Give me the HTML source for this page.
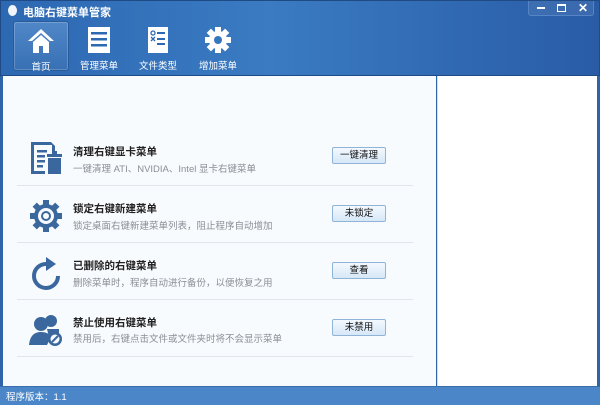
<!DOCTYPE html>
<html><head><meta charset="utf-8"><style>
*{margin:0;padding:0;box-sizing:border-box}
body{width:600px;height:405px;overflow:hidden;font-family:"Liberation Sans","Noto Sans CJK SC",sans-serif;background:#2f64a8;position:relative}
.top{position:absolute;left:0;top:0;width:600px;height:76px;background:linear-gradient(90deg,#2d68b2 0%,#3a7bc2 45%,#2f67b0 80%,#2a5ca6 100%);border:1px solid #1f4a86}
.title{position:absolute;left:22px;top:3px;color:#fff;font-size:11px;font-weight:bold}
.egg{position:absolute;left:7px;top:4px;width:9px;height:11px;border-radius:50%;background:#f0f4fa}
.ctl{position:absolute;left:527px;top:0;width:66px;height:15px;border:1px solid #5585c4;border-top:none;border-radius:0 0 3px 3px;background:rgba(255,255,255,.08);color:#fff;font-size:10px}
.nav{position:absolute;top:20px;width:56px;height:50px;color:#fff;font-size:9.5px;text-align:center}
.nav span{position:absolute;left:0;right:0;top:37px}
.nav svg{position:absolute;left:50%;transform:translateX(-50%);top:5px}
.sel{background:linear-gradient(#4f87c8,#3870b4);border:1px solid #2a5b99;border-radius:3px;box-shadow:inset 0 0 0 1px rgba(255,255,255,.2)}
.main{position:absolute;left:3px;top:76px;width:433px;height:310px;background:#f8fbfe}
.right{position:absolute;left:437px;top:76px;width:160px;height:310px;background:#fff;border-left:1px solid #d8dfe8}
.status{position:absolute;left:0;top:386px;width:600px;height:19px;background:#4a86c8;color:#fff;font-size:9.5px;padding:2px 6px;border-top:1px solid #3a6eaa}
.row{position:absolute;left:14px;width:396px;height:57px;border-bottom:1px solid #e2e6ec}
.row h3{position:absolute;left:56px;font-size:10.5px;font-weight:bold;color:#222}
.row p{position:absolute;left:56px;font-size:9.5px;color:#8a8f96}
.btn{position:absolute;left:315px;width:54px;height:17px;border:1px solid #8fb4d8;border-radius:2px;background:linear-gradient(#f4f9fe,#d6e7f7);font-size:9.5px;text-align:center;line-height:15px;color:#111}
.ic{position:absolute;left:12px}
</style></head><body>
<div class="top">
<div class="egg"></div>
<div class="title">电脑右键菜单管家</div>
<div class="ctl"><span style="position:absolute;left:8px;top:6px;width:8px;height:2px;background:#fff"></span><span style="position:absolute;left:28px;top:3px;width:9px;height:8px;border:1px solid #fff;border-top-width:2px"></span><span style="position:absolute;left:49px;top:0px;font-size:12px;font-weight:bold">✕</span></div>
<div class="nav sel" style="left:12px">
<svg width="30" height="28" viewBox="0 0 30 28"><path d="M15 2 L2 14 L6 14 L15 6 L24 14 L28 14 Z" fill="#fff"/><path d="M7 15 L15 8 L23 15 V26 H17 V19 H13 V26 H7 Z" fill="#fff"/></svg>
<span>首页</span></div>
<div class="nav" style="left:70px">
<svg width="24" height="28" viewBox="0 0 24 28"><rect x="1" y="1" width="22" height="26" fill="#fff"/><rect x="4" y="6" width="16" height="2.5" fill="#2d68b2"/><rect x="4" y="12" width="16" height="2.5" fill="#2d68b2"/><rect x="4" y="18" width="16" height="2.5" fill="#2d68b2"/></svg>
<span>管理菜单</span></div>
<div class="nav" style="left:129px">
<svg width="22" height="28" viewBox="0 0 22 28"><rect x="1" y="1" width="20" height="26" fill="#fff"/><circle cx="6" cy="7" r="2" fill="none" stroke="#2d68b2" stroke-width="1.3"/><rect x="10" y="6" width="8" height="2" fill="#2d68b2"/><path d="M4 11l4 4M8 11l-4 4" stroke="#2d68b2" stroke-width="1.3"/><rect x="10" y="12" width="8" height="2" fill="#2d68b2"/><rect x="10" y="17" width="8" height="2" fill="#2d68b2"/></svg>
<span>文件类型</span></div>
<div class="nav" style="left:189px">
<svg width="28" height="28" viewBox="0 0 28 28"><g fill="#fff"><circle cx="14" cy="14" r="9"/><g id="t"><rect x="11" y="1" width="6" height="6"/><rect x="11" y="21" width="6" height="6"/></g><use href="#t" transform="rotate(45 14 14)"/><use href="#t" transform="rotate(90 14 14)"/><use href="#t" transform="rotate(135 14 14)"/></g><circle cx="14" cy="14" r="4" fill="#3676bd"/></svg>
<span>增加菜单</span></div>
</div>
<div class="main">
<div class="row" style="top:53px"><div class="ic" style="top:11px"><svg width="36" height="36" viewBox="0 0 36 36"><path d="M2 2H22L26 6V12H23V5H5V31H16V34H2Z" fill="#3a679e"/><rect x="8" y="10" width="10" height="2.5" fill="#3a679e"/><rect x="8" y="15" width="8" height="2.5" fill="#3a679e"/><rect x="8" y="20" width="8" height="2.5" fill="#3a679e"/><rect x="8" y="25" width="6" height="2.5" fill="#3a679e"/><rect x="18" y="14" width="15" height="3" fill="#3a679e"/><rect x="23" y="11" width="5" height="3" fill="#3a679e"/><path d="M19 18H32V34H19Z" fill="#3a679e"/></svg></div><h3 style="top:15px">清理右键显卡菜单</h3><p style="top:32px">一键清理 ATI、NVIDIA、Intel 显卡右键菜单</p><div class="btn" style="top:18px">一键清理</div></div>
<div class="row" style="top:110px"><div class="ic" style="top:13px"><svg width="34" height="34" viewBox="0 0 34 34"><g fill="#3a679e"><circle cx="17" cy="17" r="12"/><g id="g2"><rect x="14" y="1" width="6" height="6"/><rect x="14" y="27" width="6" height="6"/></g><use href="#g2" transform="rotate(45 17 17)"/><use href="#g2" transform="rotate(90 17 17)"/><use href="#g2" transform="rotate(135 17 17)"/></g><circle cx="17" cy="17" r="8" fill="#f8fbfe"/><circle cx="17" cy="17" r="5" fill="#3a679e"/><circle cx="17" cy="17" r="3" fill="#f8fbfe"/></svg></div><h3 style="top:15px">锁定右键新建菜单</h3><p style="top:32px">锁定桌面右键新建菜单列表，阻止程序自动增加</p><div class="btn" style="top:19px">未锁定</div></div>
<div class="row" style="top:167px"><div class="ic" style="top:14px"><svg width="34" height="34" viewBox="0 0 34 34"><path d="M18 7 A12 12 0 1 0 29 19" fill="none" stroke="#3a679e" stroke-width="4"/><path d="M17 0 L27 7 L17 14 Z" fill="#3a679e"/></svg></div><h3 style="top:15px">已删除的右键菜单</h3><p style="top:32px">删除菜单时，程序自动进行备份，以便恢复之用</p><div class="btn" style="top:19px">查看</div></div>
<div class="row" style="top:224px"><div class="ic" style="top:13px"><svg width="34" height="34" viewBox="0 0 34 34"><g fill="#3a679e"><circle cx="22" cy="8" r="6"/><path d="M18 16 H30 V24 H20Z"/><circle cx="12" cy="11" r="7"/><path d="M0 32 C1 22 6 19 12 19 C17 19 21 21 22 24 L18 32Z"/><circle cx="26" cy="26" r="7"/></g><circle cx="26" cy="26" r="4.5" fill="#f8fbfe"/><path d="M23 29 L29 23" stroke="#3a679e" stroke-width="2"/></svg></div><h3 style="top:15px">禁止使用右键菜单</h3><p style="top:31px">禁用后，右键点击文件或文件夹时将不会显示菜单</p><div class="btn" style="top:19px">未禁用</div></div>
</div>
<div class="right"></div>
<div class="status">程序版本：1.1</div>
</body></html>
